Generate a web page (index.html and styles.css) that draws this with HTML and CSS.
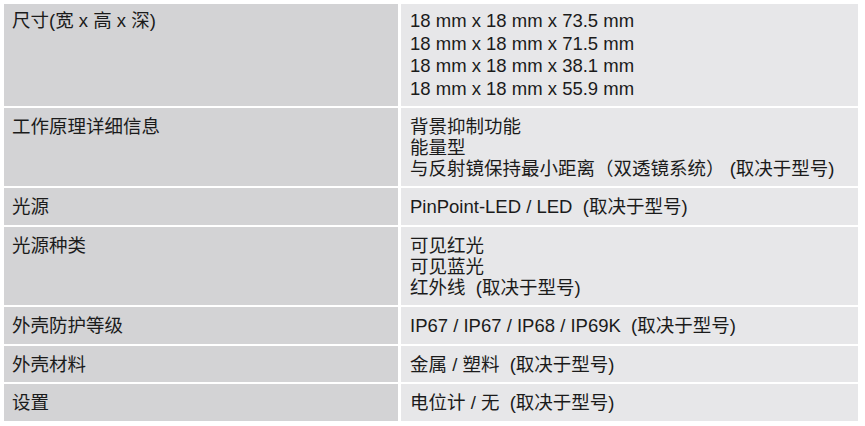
FILE: index.html
```html
<!DOCTYPE html>
<html lang="zh">
<head>
<meta charset="utf-8">
<link rel="stylesheet" href="styles.css">
</head>
<body>
<div class="spec">
  <div class="k first">尺寸(宽 x 高 x 深)</div>
  <div class="v first">18 mm x 18 mm x 73.5 mm<br>18 mm x 18 mm x 71.5 mm<br>18 mm x 18 mm x 38.1 mm<br>18 mm x 18 mm x 55.9 mm</div>
  <div class="k">工作原理详细信息</div>
  <div class="v">背景抑制功能<br>能量型<br>与反射镜保持最小距离（双透镜系统） (取决于型号)</div>
  <div class="k">光源</div>
  <div class="v">PinPoint-LED / LED &nbsp;(取决于型号)</div>
  <div class="k">光源种类</div>
  <div class="v">可见红光<br>可见蓝光<br>红外线 &nbsp;(取决于型号)</div>
  <div class="k">外壳防护等级</div>
  <div class="v">IP67 / IP67 / IP68 / IP69K &nbsp;(取决于型号)</div>
  <div class="k">外壳材料</div>
  <div class="v">金属 / 塑料 &nbsp;(取决于型号)</div>
  <div class="k">设置</div>
  <div class="v">电位计 / 无 &nbsp;(取决于型号)</div>
</div>
</body>
</html>
```
FILE: styles.css
```css
html, body {
  margin: 0;
  background: #ffffff;
}
body {
  padding: 4px 7px 0 4px;
  font-family: "Liberation Sans", "Noto Sans CJK SC", sans-serif;
  font-size: 18.5px;
  line-height: 21px;
  color: #1b1b1b;
}
.spec {
  display: grid;
  grid-template-columns: 394px 1fr;
  column-gap: 3px;
  row-gap: 2px;
}
.k, .v {
  padding: 8px 8px 7.5px 8px;
}
.k.first, .v.first {
  line-height: 22.7px;
  padding-top: 6px;
  padding-bottom: 5px;
}
.k {
  background: #d3d3d5;
}
.v {
  background: #e7e7e9;
  padding-left: 9px;
}
```
